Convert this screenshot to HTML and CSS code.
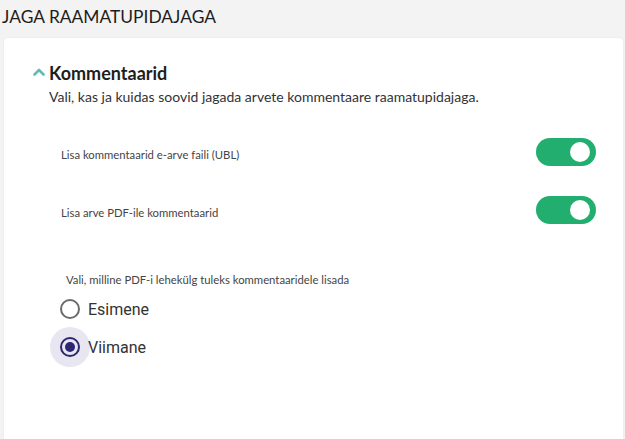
FILE: index.html
```html
<!DOCTYPE html>
<html lang="et">
<head>
<meta charset="utf-8">
<title>Jaga raamatupidajaga</title>
<link rel="stylesheet" href="styles.css">
</head>
<body>
<h1 class="page-title">JAGA RAAMATUPIDAJAGA</h1>
<section class="card">
  <div class="section-head">
    <svg class="chevron" width="12" height="8" viewBox="0 0 12 8"><path d="M1.5 6.5 L6 2 L10.5 6.5" fill="none" stroke="#62bcb3" stroke-width="2.6" stroke-linecap="round" stroke-linejoin="round"/></svg>
    <h2 class="section-title">Kommentaarid</h2>
  </div>
  <p class="section-desc">Vali, kas ja kuidas soovid jagada arvete kommentaare raamatupidajaga.</p>

  <div class="toggle-row row-first">
    <span class="row-label">Lisa kommentaarid e-arve faili (UBL)</span>
    <span class="switch on"><span class="knob"></span></span>
  </div>
  <div class="toggle-row">
    <span class="row-label">Lisa arve PDF-ile kommentaarid</span>
    <span class="switch on"><span class="knob"></span></span>
  </div>

  <div class="radio-group">
    <div class="group-label">Vali, milline PDF-i lehekülg tuleks kommentaaridele lisada</div>
    <label class="radio-row">
      <span class="radio-hit"><span class="radio"></span></span>
      <span class="radio-text">Esimene</span>
    </label>
    <label class="radio-row">
      <span class="radio-hit focused"><span class="radio checked"></span></span>
      <span class="radio-text">Viimane</span>
    </label>
  </div>
</section>
</body>
</html>
```
FILE: styles.css
```css
html, body {
  margin: 0;
  padding: 0;
  height: 100%;
}
body {
  background: #f3f3f3;
  font-family: Lato, "Liberation Sans", sans-serif;
  color: #222;
  display: flex;
  flex-direction: column;
  overflow: hidden;
}
.page-title {
  margin: 0;
  padding: 5px 0 0 2px;
  height: 33px;
  box-sizing: border-box;
  font-size: 17.4px;
  font-weight: 400;
  color: #1d1d1d;
  line-height: 24px;
}
.card {
  flex: 1;
  margin: 5px 2px 0 4px;
  background: #fff;
  border-radius: 4px 4px 0 0;
  box-shadow: 0 0 2px rgba(0,0,0,0.08);
  padding: 24px 27px 0 29px;
}
.section-head {
  display: flex;
  align-items: center;
  gap: 4px;
  height: 22px;
}
.chevron {
  display: block;
  margin-top: -3px;
}
.section-title {
  margin: 0;
  font-size: 18px;
  font-weight: 700;
  color: #1e1e1e;
  line-height: 22px;
}
.section-desc {
  margin: 3px 0 0 16px;
  font-size: 14px;
  color: #333;
  line-height: 20px;
}
.toggle-row {
  display: flex;
  align-items: center;
  justify-content: space-between;
  height: 58px;
  padding-left: 28px;
}
.row-first {
  margin-top: 16px;
}
.row-label {
  font-size: 11.3px;
  color: #444;
  padding-top: 5px;
}
.switch {
  width: 60px;
  height: 28px;
  border-radius: 14px;
  background: #22ae6f;
  position: relative;
  display: block;
}
.knob {
  position: absolute;
  right: 6px;
  top: 4px;
  width: 20px;
  height: 20px;
  border-radius: 50%;
  background: #fff;
}
.radio-group {
  margin-top: 34px;
  padding-left: 17px;
}
.group-label {
  font-size: 11.3px;
  color: #444;
  line-height: 14px;
  padding-left: 16px;
  margin-bottom: 3px;
}
.radio-row {
  display: flex;
  align-items: center;
  height: 38px;
  font-family: Roboto, "Liberation Sans", sans-serif;
}
.radio-hit {
  width: 40px;
  height: 40px;
  border-radius: 50%;
  display: flex;
  align-items: center;
  justify-content: center;
  flex: none;
}
.radio-hit.focused {
  background: #e8e6f0;
}
.radio {
  width: 16px;
  height: 16px;
  border: 2px solid #6b6b6b;
  border-radius: 50%;
  position: relative;
}
.radio.checked {
  border-color: #2c2770;
}
.radio.checked::after {
  content: "";
  position: absolute;
  left: 3px;
  top: 3px;
  width: 10px;
  height: 10px;
  border-radius: 50%;
  background: #2c2770;
}
.radio-text {
  font-size: 16px;
  color: #333;
  margin-left: -2px;
}
```
